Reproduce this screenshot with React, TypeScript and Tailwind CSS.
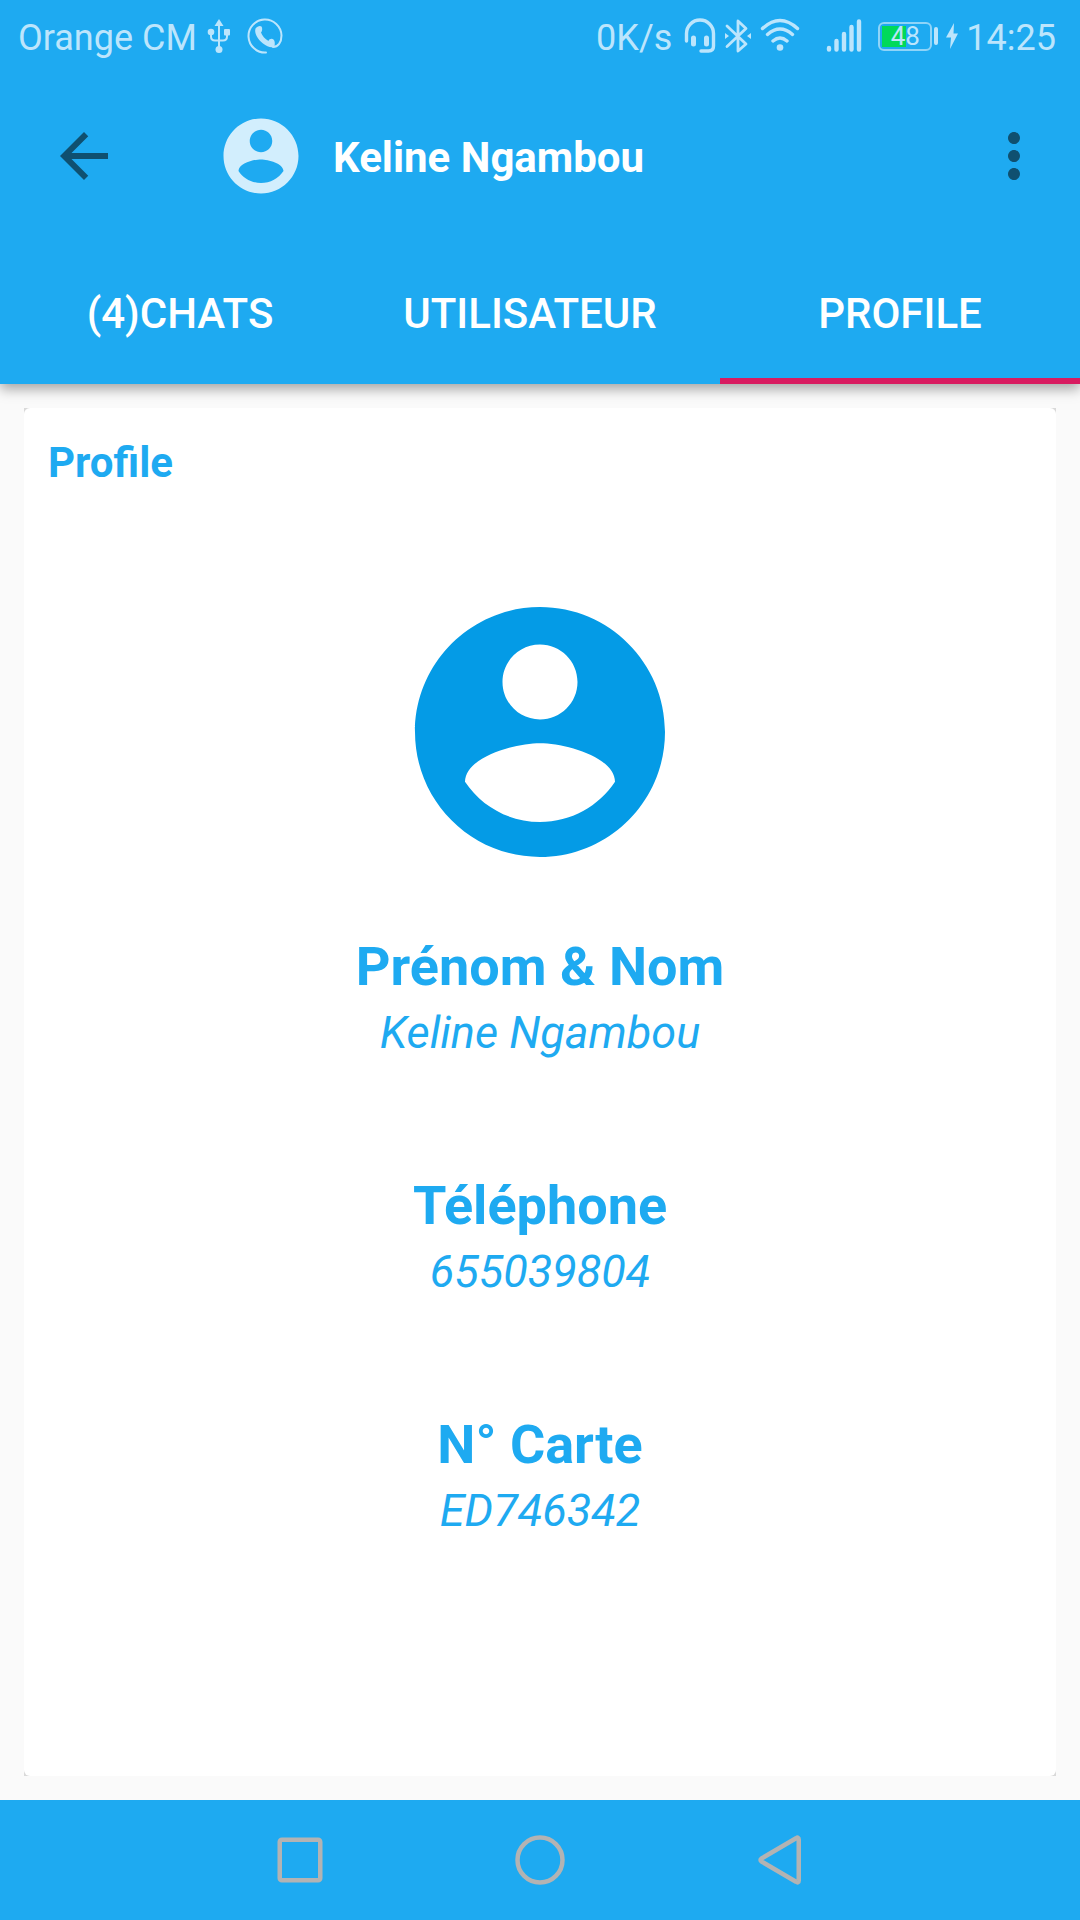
import React from "react";

const details = [
  { label: "Prénom & Nom", value: "Keline Ngambou" },
  { label: "Téléphone", value: "655039804" },
  { label: "N° Carte", value: "ED746342" },
];

const tabs = [
  { name: "(4)CHATS", style: "border-transparent" },
  { name: "UTILISATEUR", style: "border-transparent pr-5" },
  { name: "PROFILE", style: "border-t-transparent border-b-[#d81b60]" },
];

const activeTab = "PROFILE";

function AccountIcon({ className }: { className: string }) {
  return (
    <svg viewBox="0 0 24 24" fill="currentColor" className={className} aria-hidden="true">
      <path d="M12 2C6.48 2 2 6.48 2 12s4.48 10 10 10 10-4.48 10-10S17.52 2 12 2zm0 3c1.66 0 3 1.34 3 3s-1.34 3-3 3-3-1.34-3-3 1.34-3 3-3zm0 14.2c-2.5 0-4.71-1.28-6-3.22.03-1.99 4-3.08 6-3.08 1.99 0 5.97 1.09 6 3.08-1.29 1.94-3.5 3.22-6 3.22z" />
    </svg>
  );
}

function UsbIcon() {
  return (
    <svg viewBox="0 0 24 36" className="h-9 w-6" fill="currentColor" aria-hidden="true">
      <path d="M12 1l4.5 7h-9z" />
      <circle cx="4" cy="14" r="3.3" />
      <rect x="17" y="11" width="6" height="6.5" rx="1" />
      <circle cx="12" cy="31.5" r="3.5" />
      <path d="M12 6v24M4 15v3.500q0 4 4 4h8q4 0 4-4V15" fill="none" stroke="currentColor" strokeWidth="2" />
    </svg>
  );
}

function CallIcon() {
  return (
    <svg viewBox="0 0 36 36" className="size-9" fill="none" stroke="currentColor" aria-hidden="true">
      <path d="M19 34.500A16.500 16.500 0 1 1 34.500 17.500C34.500 24.500 31 29 26 29" strokeWidth="2" strokeLinecap="round" />
      <path
        d="M8.500 10.500C10 8.500 13 7 14.500 8.500C15.500 10 15.500 13 14 14.500C15 17.500 18 21 21.500 23C22 21 25 20 26.500 21.500C28 23 28 26 27.500 28C25.500 30.500 20.500 29 16 25.500C10.500 21 7 15 8.500 10.500z"
        fill="currentColor"
        stroke="none"
      />
    </svg>
  );
}

function HeadsetIcon() {
  return (
    <svg viewBox="0 0 32 36" className="h-9 w-8" fill="none" stroke="currentColor" aria-hidden="true">
      <path d="M2.500 23V15.500A13.500 13.500 0 0 1 29.500 15.500V28Q29.500 33 24.500 33H17" strokeWidth="3.400" strokeLinecap="round" />
      <path d="M9.500 20v6M22.500 20v6" strokeWidth="5" strokeLinecap="round" />
    </svg>
  );
}

function BluetoothIcon() {
  return (
    <svg viewBox="0 0 28 36" className="h-9 w-7" fill="none" stroke="currentColor" aria-hidden="true">
      <path d="M3 8L22 26L14 33V3L22 10.500L3 28.500" strokeWidth="2.800" strokeLinecap="round" strokeLinejoin="round" />
      <path d="M1 15l4 3-4 3zM27 15l-4 3 4 3z" fill="currentColor" stroke="none" />
    </svg>
  );
}

function WifiIcon() {
  return (
    <svg viewBox="0 0 40 36" className="h-9 w-10" fill="none" stroke="currentColor" aria-hidden="true">
      <path d="M2.500 10.500Q20-5.500 37.500 10.500M7.500 16.500Q20 5.500 32.500 16.500M13 23Q20 17 27 23" strokeWidth="3.400" strokeLinecap="round" />
      <circle cx="20" cy="29.500" r="3.300" fill="currentColor" stroke="none" />
    </svg>
  );
}

function SignalIcon() {
  return (
    <svg viewBox="0 0 36 36" className="size-9" fill="none" stroke="currentColor" aria-hidden="true">
      <path d="M3 30V31.500M10.500 23V31.500M18 16V31.500M25.500 9V31.500M33 3.500V31.500" strokeWidth="4.400" strokeLinecap="round" />
    </svg>
  );
}

function Battery() {
  return (
    <div className="flex items-center gap-0.5">
      <div className="relative h-[29px] w-[54px] rounded-md border-2 border-[#8fd4f8] p-0.5">
        <div className="h-full w-6 bg-[#00d95a]" />
        <span className="absolute inset-0 flex items-center justify-center text-[26px] leading-none">48</span>
      </div>
      <div className="h-[18px] w-1 rounded-full bg-current" />
    </div>
  );
}

function BoltIcon() {
  return (
    <svg viewBox="0 0 12 28" className="h-7 w-3" fill="currentColor" aria-hidden="true">
      <path d="M8 1L0 15.500h5L4 27L12 11.500H7.500z" />
    </svg>
  );
}

function StatusBar() {
  return (
    <div className="flex h-[72px] items-center justify-between pr-6 pl-[18px] text-[36px] leading-[42px] text-[#bce5fc]">
      <div className="flex items-center">
        <span className="pt-1">Orange CM</span>
        <span className="ml-[10px] flex items-center gap-4">
          <UsbIcon />
          <CallIcon />
        </span>
      </div>
      <div className="flex items-center">
        <span className="pt-1">0K/s</span>
        <span className="ml-3 flex items-center gap-2">
          <HeadsetIcon />
          <BluetoothIcon />
          <WifiIcon />
        </span>
        <span className="ml-[26px] flex items-center gap-4">
          <SignalIcon />
          <Battery />
        </span>
        <span className="ml-2">
          <BoltIcon />
        </span>
        <span className="ml-2 pt-1">14:25</span>
      </div>
    </div>
  );
}

export default function App() {
  return (
    <div className="flex min-h-screen flex-col bg-[#fafafa] font-['Roboto',sans-serif] text-[#1eaaf1]">
      <header className="relative bg-[#1eaaf1] text-white shadow-[0_5px_12px_rgba(0,0,0,0.35)]">
        <StatusBar />
        <div className="flex h-[168px] items-center pr-[30px] pl-12">
          <button type="button" aria-label="Retour" className="text-[#0f5070]">
            <svg viewBox="0 0 24 24" fill="currentColor" className="size-[72px]" aria-hidden="true">
              <path d="M20 11H7.830l5.590-5.590L12 4l-8 8 8 8 1.410-1.410L7.830 13H20v-2z" />
            </svg>
          </button>
          <AccountIcon className="ml-24 size-[90px] text-[#d2eefd]" />
          <h1 className="ml-[27px] flex-1 pt-1 text-[42px] leading-[48px] font-bold">Keline Ngambou</h1>
          <button type="button" aria-label="Plus d'options" className="text-[#0f5070]">
            <svg viewBox="0 0 24 24" fill="currentColor" className="size-[72px]" aria-hidden="true">
              <path d="M12 8c1.100 0 2-.9 2-2s-.9-2-2-2-2 .9-2 2 .9 2 2 2zm0 2c-1.100 0-2 .9-2 2s.9 2 2 2 2-.9 2-2-.9-2-2-2zm0 6c-1.100 0-2 .9-2 2s.9 2 2 2 2-.9 2-2-.9-2-2-2z" />
            </svg>
          </button>
        </div>
        <div role="tablist" className="grid h-36 grid-cols-3">
          {tabs.map((tab) => (
            <button
              key={tab.name}
              type="button"
              role="tab"
              aria-selected={tab.name === activeTab}
              className={`border-y-6 pt-1 text-[42px] leading-[48px] font-medium ${tab.style}`}
            >
              {tab.name}
            </button>
          ))}
        </div>
      </header>

      <main className="flex flex-1 flex-col p-6">
        <div className="flex flex-1 flex-col bg-[#d9d9d9]">
          <section className="flex flex-1 flex-col rounded-md bg-white p-6">
            <h2 className="text-[42px] leading-[62px] font-bold">Profile</h2>
            <AccountIcon className="mt-[88px] size-[300px] self-center text-[#049be6]" />
            <dl className="mt-[53px] flex flex-col gap-[107px] text-center">
              {details.map((item) => (
                <div key={item.label}>
                  <dt className="text-[54px] leading-[64px] font-bold">{item.label}</dt>
                  <dd className="text-[45px] leading-[68px] italic">{item.value}</dd>
                </div>
              ))}
            </dl>
          </section>
        </div>
      </main>

      <nav aria-label="Navigation" className="flex h-[120px] items-center justify-center bg-[#1eaaf1] text-[#b3b3b3]">
        <button type="button" aria-label="Applications récentes" className="flex w-60 justify-center">
          <svg viewBox="0 0 60 60" className="size-[60px]" fill="none" stroke="currentColor" strokeWidth="4.500" aria-hidden="true">
            <rect x="9.750" y="9.750" width="40.500" height="40.500" rx="2" />
          </svg>
        </button>
        <button type="button" aria-label="Accueil" className="flex w-60 justify-center">
          <svg viewBox="0 0 60 60" className="size-[60px]" fill="none" stroke="currentColor" strokeWidth="4.500" aria-hidden="true">
            <circle cx="30" cy="30" r="22.500" />
          </svg>
        </button>
        <button type="button" aria-label="Précédent" className="flex w-60 justify-center">
          <svg viewBox="0 0 60 60" className="size-[60px]" fill="none" stroke="currentColor" strokeWidth="4.500" aria-hidden="true">
            <path d="M46 8.300Q48.750 6.500 48.750 9.500V50.500Q48.750 53.500 46 51.700L11.500 31.500Q9.500 30 11.500 28.500z" strokeLinejoin="round" />
          </svg>
        </button>
      </nav>
    </div>
  );
}
